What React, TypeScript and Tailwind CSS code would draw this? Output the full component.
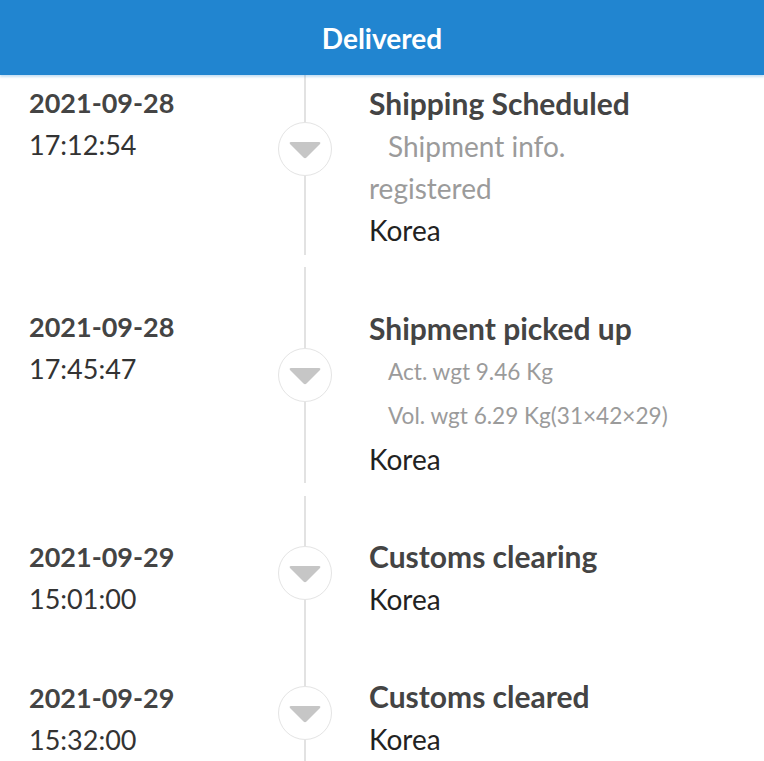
import React from "react";

type Row = {
  date: string;
  time: string;
  title: string;
  details: React.ReactNode;
  place: string;
  rowCls: string;
  leftCls: string;
  rightCls: string;
};

function Marker() {
  return (
    <div className="flex h-[54px] w-[54px] shrink-0 items-center justify-center rounded-full border-[1.5px] border-[#e4e4e4] bg-white">
      <svg width="34" height="20" viewBox="0 0 34 20" className="mt-[2px]">
        <path
          d="M3 2 L31 2 Q33 2 32 4 L18.5 17.5 Q17 19 15.5 17.5 L2 4 Q1 2 3 2 Z"
          fill="#c6c6c6"
        />
      </svg>
    </div>
  );
}

const rows: Row[] = [
  {
    date: "2021-09-28",
    time: "17:12:54",
    title: "Shipping Scheduled",
    details: (
      <div className="text-[28px] leading-[42px] text-[#9b9b9b]">
        <span className="pl-[19px]">Shipment info.</span>
        <br />
        registered
      </div>
    ),
    place: "Korea",
    rowCls: "h-[213px] mb-[12px]",
    leftCls: "pt-[40px]",
    rightCls: "pt-[39px]",
  },
  {
    date: "2021-09-28",
    time: "17:45:47",
    title: "Shipment picked up",
    details: (
      <div className="pl-[19px] text-[22.6px] leading-[44px] text-[#9b9b9b]">
        <div>Act. wgt 9.46 Kg</div>
        <div>Vol. wgt 6.29 Kg(31×42×29)</div>
      </div>
    ),
    place: "Korea",
    rowCls: "h-[216px] mb-[13px]",
    leftCls: "pt-[39px]",
    rightCls: "pt-[39px]",
  },
  {
    date: "2021-09-29",
    time: "15:01:00",
    title: "Customs clearing",
    details: null,
    place: "Korea",
    rowCls: "h-[154px]",
    leftCls: "pt-[40px]",
    rightCls: "pt-[38px]",
  },
  {
    date: "2021-09-29",
    time: "15:32:00",
    title: "Customs cleared",
    details: null,
    place: "Korea",
    rowCls: "h-[125px]",
    leftCls: "pt-[27px]",
    rightCls: "pt-[24px]",
  },
];

export default function App() {
  return (
    <div
      className="relative h-[761px] w-[764px] overflow-hidden bg-white"
      style={{ fontFamily: "Lato, 'Noto Sans', sans-serif" }}
    >
      <div className="absolute inset-x-0 top-0 z-10 flex h-[75px] items-center justify-center bg-[#2185d0] shadow-[0_2px_2px_rgba(33,133,208,0.25)]">
        <span className="text-[28px] font-bold text-white">Delivered</span>
      </div>
      <div className="flex flex-col pt-[42px]">
        {rows.map((r, i) => (
          <div key={i} className={"flex " + r.rowCls}>
            <div className={"w-[278px] shrink-0 pl-[29px] leading-[42px] " + r.leftCls}>
              <div className="text-[27px] font-bold text-[#444444]">{r.date}</div>
              <div className="text-[27px] text-[#333333]">{r.time}</div>
            </div>
            <div className="flex w-[54px] shrink-0 flex-col items-center">
              <div className="w-[2px] flex-1 bg-[#e2e2e2]" />
              <Marker />
              <div className="w-[2px] flex-1 bg-[#e2e2e2]" />
            </div>
            <div className={"flex-1 pl-[37px] " + r.rightCls}>
              <div className="text-[30px] font-bold leading-[44px] text-[#444444]">
                {r.title}
              </div>
              {r.details}
              <div className="text-[28px] leading-[42px] text-[#222222]">{r.place}</div>
            </div>
          </div>
        ))}
      </div>
    </div>
  );
}
